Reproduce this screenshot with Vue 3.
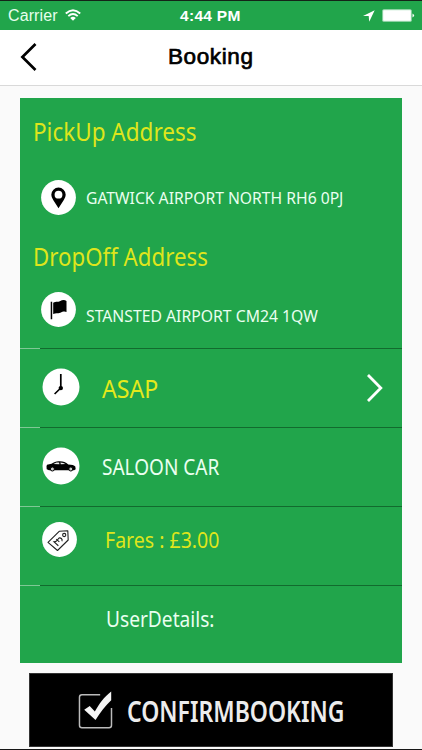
<script setup>
const title = 'Booking'
</script>

<template>
  <div class="screen">
    <div class="status">
      <span class="carrier">Carrier</span>
      <svg class="wifi" width="16" height="12" viewBox="0 0 16 12" fill="none" stroke="#fff" stroke-width="1.9">
        <path d="M.8 4.5Q8-2 15.2 4.5M3.3 7.1Q8 3 12.7 7.1" />
        <path d="M5.2 8.9Q8 6.6 10.8 8.9L8 11.7z" fill="#fff" stroke="none" />
      </svg>
      <span class="clock">4:44 PM</span>
      <svg class="locate" width="12" height="12" viewBox="0 0 12 12"><path d="M11.7.3 0 6h5.7l.5 5.7z" fill="#fff" /></svg>
      <svg class="battery" width="33" height="13" viewBox="0 0 33 13" fill="#fff">
        <rect x=".3" y=".3" width="29.4" height="12.4" rx="1.5" opacity=".65" />
        <rect x="1.2" y="1.2" width="27.6" height="10.6" rx=".7" />
        <path d="M30.5 4.5q3.2 2 0 4z" />
      </svg>
    </div>
    <header class="nav">
      <svg class="back" width="18" height="28" viewBox="0 0 18 28" fill="none" stroke="#000" stroke-width="2.7"><path d="M15.5 1 2.4 14l13.1 13" /></svg>
      <h1>{{ title }}</h1>
    </header>
    <main>
      <section class="card">
        <div class="addresses">
          <h2><span class="t pickup">PickUp Address</span></h2>
          <div class="row first">
            <svg class="icon" width="35" height="35" viewBox="0 0 35 35">
              <circle cx="17.5" cy="17.5" r="17.4" fill="#fff" />
              <path d="M17.5 28.2 12.2 20Q10.3 17.3 10.3 14.8a7.2 7.2 0 0 1 14.4 0q0 2.5-1.9 5.2z" />
              <circle cx="17.5" cy="14.7" r="3.9" fill="#fff" />
            </svg>
            <span class="t addr from">GATWICK AIRPORT NORTH RH6 0PJ</span>
          </div>
          <h2><span class="t dropoff">DropOff Address</span></h2>
          <div class="row second">
            <svg class="icon" width="35" height="35" viewBox="0 0 35 35">
              <circle cx="17.5" cy="17.5" r="17.4" fill="#fff" />
              <path d="M9.7 9.8h1.5v17.5H9.7zM12.2 10.8c3-2 4.1-.5 6.6-1.6 2.7-1.3 4.5-1.5 6.7-.3v11.2c-2-1.1-3.9-.3-6.2.6-2.8 1.1-4.5 0-7.1 1.4z" />
            </svg>
            <span class="t addr to">STANSTED AIRPORT CM24 1QW</span>
          </div>
        </div>
        <div class="option">
          <svg class="icon big" width="38" height="38" viewBox="0 0 38 38" fill="none" stroke="#000">
            <circle cx="19" cy="19" r="18.5" fill="#fff" stroke="none" />
            <path d="M18.8 6v14l-6.2 6" stroke-width="1.7" />
            <circle cx="18.8" cy="20.1" r="2.2" fill="#000" stroke="none" />
          </svg>
          <span class="t asap">ASAP</span>
          <svg class="next" width="18" height="28" viewBox="0 0 18 28" fill="none" stroke="#fff" stroke-width="2.8"><path d="M2 1 14.8 14 2 27" /></svg>
        </div>
        <div class="option">
          <svg class="icon big" width="38" height="38" viewBox="0 0 38 38">
            <circle cx="19" cy="19" r="18.5" fill="#fff" />
            <path d="M4.5 19.2 5 17.7l4.5-.9c2.4-1.5 4.4-2.4 7-2.5 4.8-.2 7 .8 9.8 3.2 3.4.2 6.1.8 7 2l.4 2.7-1.6 1H7l-2.3-1z" />
            <path d="m11.4 17 3.1-1.6h2.6l.3 1.8zM18.4 15.4q3.2 0 5.1 1.6l-4.7.2z" fill="#eee" />
            <g fill="#ccc" stroke="#000" stroke-width="1"><circle cx="10.4" cy="22" r="2" /><circle cx="28.8" cy="22" r="2" /></g>
          </svg>
          <span class="t saloon">SALOON CAR</span>
        </div>
        <div class="option fare">
          <svg class="icon" width="35" height="35" viewBox="0 0 35 35" fill="none" stroke="#222" stroke-width="1.1">
            <circle cx="17.5" cy="17.5" r="17.4" fill="#fff" stroke="none" />
            <path d="M17.2 9.3 25.8 8.8 26.2 18 15.5 28.5 6 20.3z" stroke-linejoin="round" />
            <circle cx="22.2" cy="13" r="1.6" />
            <path d="M2.4-2.6Q1.9-4.2.2-4.2q-2.5 0-2 2.8Q-1.2 1.5-3 3.2H2.8M-3.2-.3H1" transform="translate(16.4 19.5) rotate(42)" />
          </svg>
          <span class="t fares">Fares : £3.00</span>
        </div>
        <div class="option user"><span class="t details">UserDetails:</span></div>
      </section>
      <button class="confirm">
        <svg width="36" height="40" viewBox="0 0 36 40">
          <path d="M22.5 4.5H4Q1.5 4.5 1.5 7v28.5Q1.5 38 4 38h27.5q2.5 0 2.5-2.5V18" fill="none" stroke="#bbb" stroke-width="1.5" />
          <path d="m6.3 19.7 5.6-3.8 5.2 5.7C21.5 14 26.2 7 33.7 1.3v8.9C28 15.5 22.5 22.5 17.8 30.2z" fill="#f5f5f5" />
        </svg>
        <span class="t label">CONFIRMBOOKING</span>
      </button>
    </main>
  </div>
</template>

<style>
body { margin: 0; }
</style>
<style scoped>
.screen { width: 422px; height: 750px; box-sizing: border-box; background: #fafafa; border-top: 1px solid #142418; border-bottom: 1px solid #161616; overflow: hidden; display: flex; flex-direction: column; font-family: "Noto Sans", sans-serif; }
.status { height: 29px; background: #21a54b; color: #fff; display: flex; align-items: center; box-sizing: border-box; padding-left: 8px; font: 16px/28px "Liberation Sans", sans-serif; flex: none; }
.carrier { width: 57px; letter-spacing: .1px; color: #e6ffed; }
.wifi { margin-top: -2px; }
.clock { margin-left: 99px; width: 61px; font-weight: 700; font-size: 15.5px; letter-spacing: .3px; white-space: nowrap; }
.locate { margin-left: 122px; }
.battery { margin-left: 7px; flex: none; }
.nav { height: 55px; background: #fff; border-bottom: 1px solid #d9d9d9; display: flex; align-items: center; padding-left: 20px; flex: none; }
.back { margin-top: -2px; }
h1 { margin: -1px 0 0 130px; font: 400 22.5px/30px "Liberation Sans", sans-serif; letter-spacing: .6px; -webkit-text-stroke: .7px #000; }
main { padding: 12px 20px 0; }
.card { background: #21a54b; height: 565px; width: 382px; color: #eafff0; }
.addresses { height: 250px; padding-top: 16px; box-sizing: border-box; }
h2 { margin: 0 0 0 13px; height: 36px; line-height: 34px; font-size: 25px; font-weight: 400; color: #dfe51c; }
.t { display: inline-block; white-space: nowrap; transform-origin: left center; }
.row { display: flex; padding-left: 21px; align-items: center; }
.icon { flex: none; }
.big { margin-left: 1px; margin-top: -2px; }
.first { height: 35px; margin: 30px 0 24px; }
.second { height: 35px; margin-top: 17px; }
.addr { font-size: 17px; margin-left: 10px; line-height: 24px; }
.to { margin-top: 13px; }
.option { height: 79px; box-sizing: border-box; padding: 1px 0 0 21px; display: flex; align-items: center; background: linear-gradient(90deg, #7fc895 20px, #126b2e 20px) top / 100% 1px no-repeat; }
.asap { color: #e5e91b; font-size: 26px; margin-left: 22px; }
.saloon { font-size: 22px; margin-left: 22px; margin-top: -2px; }
.next { margin-left: auto; margin-right: 18px; }
.fare { padding-left: 22px; padding-bottom: 13px; }
.fares { color: #dfe51c; font-size: 22px; margin-left: 28px; margin-top: -1px; }
.user { padding: 0 0 13px 86px; }
.details { font-size: 22px; }
.confirm { display: flex; align-items: center; width: 364px; height: 74px; box-sizing: border-box; margin: 10px 0 0 9px; padding: 0 0 0 48px; border: 1px solid #333; background: #000; color: #ececec; font: 600 28px/40px "Noto Sans", sans-serif; }
.label { margin-left: 14px; margin-top: 2px; transform: scaleX(.822); }
.pickup { transform: scaleX(.9); }
.dropoff { transform: scaleX(.89); }
.addr { transform: scaleX(.922); }
.to { transform: scaleX(.926); }
.asap { transform: scaleX(.89); }
.saloon { transform: scaleX(.865); }
.fares { transform: scaleX(.887); }
.details { transform: scaleX(.87); }
</style>
